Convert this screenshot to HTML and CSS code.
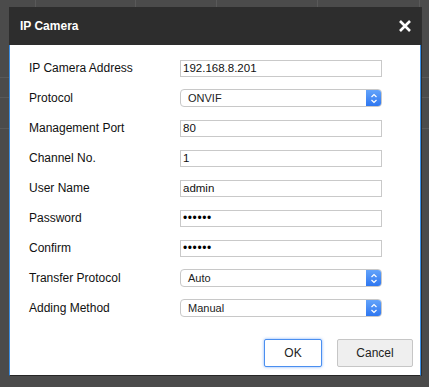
FILE: index.html
```html
<!DOCTYPE html>
<html lang="en">
<head>
  <meta charset="UTF-8">
  <meta name="viewport" content="width=device-width, initial-scale=1.0">
  <title>IP Camera</title>
  <link rel="stylesheet" href="styles.css">
</head>
<body>

  <div class="dialog">
    <div class="dialog-header">
      <h2>IP Camera</h2>
      <span class="close-btn">
        <svg width="12" height="12" viewBox="0 0 12 12">
          <path d="M1 1 L11 11 M11 1 L1 11" stroke="#fff" stroke-width="2.6" fill="none"/>
        </svg>
      </span>
    </div>

    <div class="dialog-body">
      <form class="form-grid">
        <label>IP Camera Address</label>
        <input type="text" class="text-input" value="192.168.8.201">

        <label>Protocol</label>
        <div class="select-box"><span>ONVIF</span><span class="select-arrow"><svg width="8" height="11" viewBox="0 0 8 11"><path d="M1.5 4 L4 1.5 L6.5 4 M1.5 7 L4 9.5 L6.5 7" stroke="#fff" stroke-width="1.2" fill="none"/></svg></span></div>

        <label>Management Port</label>
        <input type="text" class="text-input" value="80">

        <label>Channel No.</label>
        <input type="text" class="text-input" value="1">

        <label>User Name</label>
        <input type="text" class="text-input" value="admin">

        <label>Password</label>
        <input type="password" class="text-input" value="123456">

        <label>Confirm</label>
        <input type="password" class="text-input" value="123456">

        <label>Transfer Protocol</label>
        <div class="select-box"><span>Auto</span><span class="select-arrow"><svg width="8" height="11" viewBox="0 0 8 11"><path d="M1.5 4 L4 1.5 L6.5 4 M1.5 7 L4 9.5 L6.5 7" stroke="#fff" stroke-width="1.2" fill="none"/></svg></span></div>

        <label>Adding Method</label>
        <div class="select-box"><span>Manual</span><span class="select-arrow"><svg width="8" height="11" viewBox="0 0 8 11"><path d="M1.5 4 L4 1.5 L6.5 4 M1.5 7 L4 9.5 L6.5 7" stroke="#fff" stroke-width="1.2" fill="none"/></svg></span></div>
      </form>

      <div class="actions">
        <button type="button" class="ok-btn">OK</button>
        <button type="button" class="cancel-btn">Cancel</button>
      </div>
    </div>
  </div>

</body>
</html>
```

FILE: styles.css
```css
/* Reset default styles */
* {
  margin: 0;
  padding: 0;
  box-sizing: border-box;
}

/* Page backdrop with faint table lines */
body {
  font-family: "Liberation Sans", Arial, sans-serif;
  height: 387px;
  padding: 7px 8px 0 9px;
  background-color: #4b4b4b;
  background-image:
    linear-gradient(#595959, #595959),
    linear-gradient(#595959, #595959),
    linear-gradient(#595959, #595959),
    linear-gradient(#595959, #595959),
    linear-gradient(#595959, #595959),
    linear-gradient(#595959, #595959),
    linear-gradient(#595959, #595959),
    linear-gradient(#595959, #595959);
  background-size:
    1px 7px, 1px 7px, 1px 7px, 1px 7px, 1px 7px,
    100% 1px, 100% 1px, 100% 1px;
  background-position:
    35px 0, 135px 0, 216px 0, 317px 0, 419px 0,
    0 77px, 0 97px, 0 128px;
  background-repeat: no-repeat;
}

/* Dialog */
.dialog {
  width: 412px;
  box-shadow: 1px 0 0 #2f2f2f;
}

.dialog-header {
  height: 38px;
  display: flex;
  align-items: center;
  justify-content: space-between;
  padding: 0 10px 0 11px;
  background: #2d2d2d;
}

.dialog-header h2 {
  color: #fff;
  font-size: 12px;
  font-weight: bold;
}

.close-btn {
  display: flex;
}

.dialog-body {
  background: #fff;
  border-left: 1px solid #3b8fe5;
  border-right: 1px solid #3b8fe5;
  border-bottom: 1px solid #262626;
  padding: 8px 7px 8px 19px;
}

/* Form rows */
.form-grid {
  display: grid;
  grid-template-columns: 151px 202px;
  grid-auto-rows: 30px;
  align-items: center;
}

.form-grid label {
  font-size: 12px;
  color: #111;
}

.text-input {
  width: 202px;
  height: 17px;
  padding: 0 2px;
  font-family: "Liberation Sans", Arial, sans-serif;
  font-size: 11.5px;
  color: #111;
  border: 1px solid #c9c9c9;
  outline: none;
}

.text-input[type="password"] {
  font-size: 12px;
  letter-spacing: 0.6px;
  color: #000;
}

/* Fake native select */
.select-box {
  width: 202px;
  height: 18px;
  display: flex;
  align-items: center;
  justify-content: space-between;
  border: 1px solid #c8c8c8;
  border-radius: 4px;
  font-size: 11px;
  color: #222;
  overflow: hidden;
}

.select-box span:first-child {
  padding-left: 7px;
}

.select-arrow {
  width: 16px;
  height: 18px;
  margin: -1px -1px -1px 0;
  display: flex;
  align-items: center;
  justify-content: center;
  background: linear-gradient(#66a6fb, #2b74f0);
  border-radius: 0 4px 4px 0;
}

/* Buttons */
.actions {
  display: flex;
  justify-content: flex-end;
  gap: 15px;
  margin-top: 16px;
}

.ok-btn,
.cancel-btn {
  height: 28px;
  font-family: "Liberation Sans", Arial, sans-serif;
  font-size: 12px;
  color: #222;
  border-radius: 2px;
  cursor: pointer;
}

.ok-btn {
  width: 58px;
  background: #fff;
  border: 1px solid #4a8ff0;
  box-shadow: 0 0 3px rgba(70, 140, 245, 0.7);
}

.cancel-btn {
  width: 76px;
  background: #efefef;
  border: 1px solid #c6c6c6;
}
```
